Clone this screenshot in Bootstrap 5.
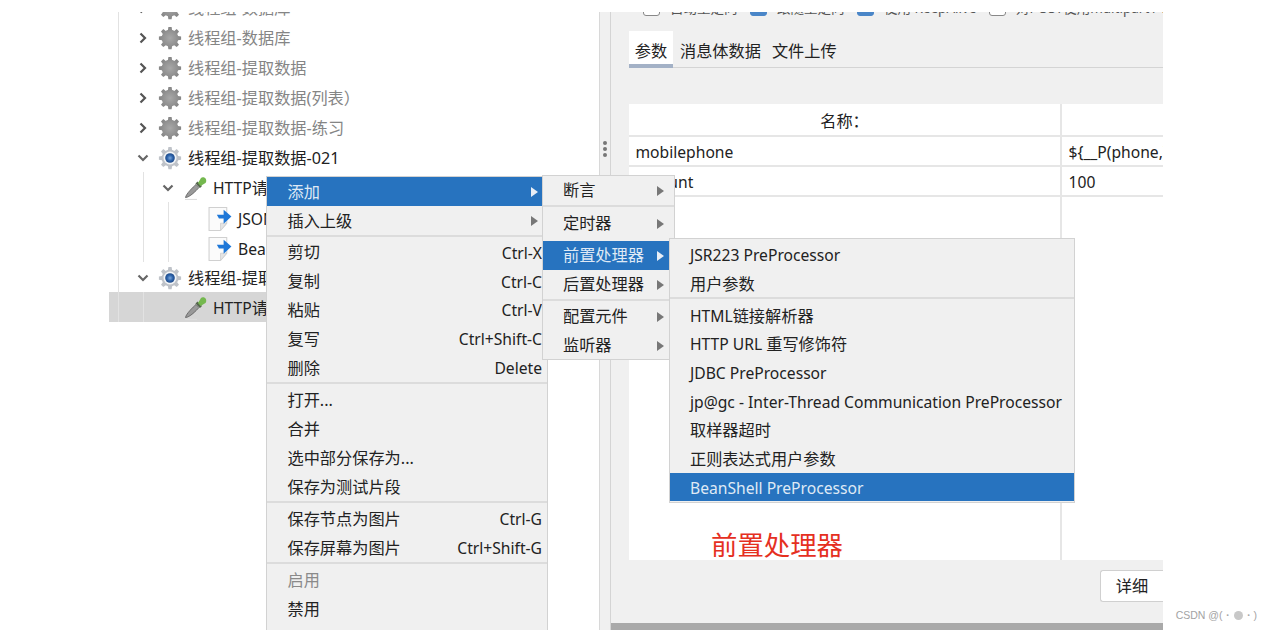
<!DOCTYPE html>
<html lang="zh"><head><meta charset="utf-8"><title>JMeter</title>
<link rel="stylesheet" href="https://cdn.jsdelivr.net/npm/bootstrap@5.3.0/dist/css/bootstrap.min.css">
<style>
html,body{height:630px;overflow:hidden;background:#fff}
body{font-family:"Noto Sans","Noto Sans CJK SC",sans-serif;font-size:16.2px;color:#222;line-height:1.2}
.en{font-size:15.65px}
.shot{margin:12px 0 0 109px;width:1054px;height:618px;overflow:hidden;position:relative}
.tree-pane{width:491px;flex:none;border-right:1px solid #d8d8d8;overflow:hidden}
.tree-inner{margin-top:-20px}
.t-row{height:30px;display:flex;align-items:center;white-space:nowrap;padding-left:28px;padding-top:4px;
 background-image:linear-gradient(#e2e2e2,#e2e2e2);background-size:1px 100%;background-position:9px 0;background-repeat:no-repeat}
.t-row.g2{background-image:linear-gradient(#e2e2e2,#e2e2e2),linear-gradient(#e2e2e2,#e2e2e2);background-size:1px 100%,1px 100%;background-position:9px 0,34px 0}
.t-row.g3{background-image:linear-gradient(#e2e2e2,#e2e2e2),linear-gradient(#e2e2e2,#e2e2e2),linear-gradient(#e2e2e2,#e2e2e2);background-size:1px 100%,1px 100%,1px 100%;background-position:9px 0,34px 0,59px 0}
.t-row.sel{background-color:#d6d6d6}
.t-dis{color:#858585}
.ind1{padding-left:53px}.ind2{padding-left:99px}
.chev{width:12px;height:12px;flex:none;margin:0 9px 2px 0}
.no-chev{width:21px;flex:none}
.ic{width:24px;height:24px;flex:none;margin:0 6px 2px 0}
.ic-doc{margin:0 5px 2px 0;width:25px;height:25px;flex:none}
.split{width:11px;flex:none;background:#f0f0f0;border-right:1px solid #d4d4d4;padding-top:129px}
.split-dots{gap:2px}
.dot{width:4px;height:4px;border-radius:50%;background:#777}
.right-pane{width:552px;flex:none;background:#f0f0f0;overflow:hidden}
.opts{margin-top:-16px;padding:2px 0 0 32px;height:22px;white-space:nowrap;overflow:hidden;color:#555;font-size:13.5px;flex:none}
.box{width:17px;height:17px;border:1px solid #888;border-radius:3px;background:#fff;flex:none;margin:0 10px 2px 0}
.box.on{background:#4a86c8;border-color:#4a86c8}
.opt1{width:107px;flex:none;display:flex;align-items:center}
.opt3{width:132px;flex:none;display:flex;align-items:center}
.tabs{margin:13px 0 0 18px;height:37px;border-bottom:1px solid #d4d4d4;flex:none}
.tab-on{width:44px;background:#fff;border-bottom:4px solid #a3b1c6;text-align:center;padding-top:11px;height:37px}
.tab-x{padding:11px 0 0 7px}
.tab-x+.tab-x{padding-left:11px}
.tbl{margin:36px 0 0 18px;background:#fff;height:456px;flex:none;display:grid;grid-template-columns:433px 101px;grid-template-rows:33px 30px 30px 1fr}
.cell{padding:2px 0 0 6.5px;border-bottom:2px solid #e6e6e6;border-right:2px solid #e6e6e6;display:flex;align-items:center;white-space:nowrap;overflow:hidden}
.cell.hd{justify-content:center;padding:5px 0 0}
.cell.fill{border-bottom:0}
.note{color:#e5301f;font-size:26.4px;padding-left:82px;align-items:flex-end;line-height:1.05}
.bot{height:63px;justify-content:flex-end;padding-top:10px;flex:none}
.btn-detail{width:63px;height:32px;background:#fff;border:1px solid #d0d0d0;border-right:0;border-radius:3px 0 0 3px;text-align:center;line-height:30px}
.strip{height:7px;background:#a9a9a9;flex:none}
.menu-box{position:absolute;background:#f0f0f0;border:1px solid #d2d2d2;white-space:nowrap}
.m-main{left:157px;top:164px;width:282px;height:460px;border-bottom:0}
.m-sub1{left:433px;top:163px;width:133px;height:185px}
.m-sub2{left:560px;top:226px;width:406px;height:265px;padding-top:1px}
.mi{height:29px;display:flex;align-items:center;justify-content:space-between;padding:1.5px 5px 0 20.5px}
.m-main .mi.tight{height:28.8px}
.m-sub1 .mi{padding:0 10px 0 20px}
.m-sub1 .mi.nar{padding-right:5px}
.m-sub2 .mi{padding:3px 0 0 20px;height:28.7px}
.mi.act{background:#2773bf;color:#dfe9f5}
.mi.off{color:#8a8a8a}
.msep{height:3px;background:#dcdcdc;border-bottom:1px solid #f0f0f0}
.arr{width:0;height:0;border-left:7px solid #777;border-top:5px solid transparent;border-bottom:5px solid transparent;flex:none}
.act .arr{border-left-color:#e8eef6}
.nar{width:126px}
.m-sub1 .mi.tall{height:33px;padding-bottom:1px}
.wm{position:absolute;right:14px;bottom:8px;font-size:10.5px;color:#a3a3a3;font-family:"Liberation Sans",sans-serif}
.wm-dot{display:inline-block;width:9px;height:9px;border-radius:50%;background:#c8c8c8;vertical-align:-1px}
</style></head><body>
<svg width="0" height="0" class="d-block" aria-hidden="true"><defs>
<radialGradient id="gg"><stop offset="0" stop-color="#a8a8a8"/><stop offset="1" stop-color="#858585"/></radialGradient>
<radialGradient id="bb"><stop offset="0" stop-color="#7aa7dc"/><stop offset=".6" stop-color="#2c62aa"/><stop offset="1" stop-color="#1f4a88"/></radialGradient>
<g id="gear"><path d="M10.4 1h3.2l.5 3a8 8 0 0 1 2.100.9l2.500-1.800 2.300 2.300-1.800 2.500c.4.7.7 1.400.9 2.100l3 .5v3.200l-3 .5a8 8 0 0 1-.9 2.100l1.800 2.500-2.300 2.300-2.500-1.800a8 8 0 0 1-2.100.9l-.5 3h-3.200l-.5-3a8 8 0 0 1-2.100-.9l-2.500 1.800-2.300-2.300 1.800-2.500a8 8 0 0 1-.9-2.100l-3-.5v-3.200l3-.5c.2-.7.5-1.400.9-2.100L3 5.400l2.300-2.300L7.800 4.900a8 8 0 0 1 2.100-.9z"/></g>
<g id="drop"><path d="M2.500 21.500c.5-3.500 7.500-10.500 10.500-13l3 3c-2.500 3-9.500 10-13.500 10z" fill="#9a9a9a" stroke="#5c5c5c" stroke-width=".8"/><path d="M12.500 7.500l4.500 4.500 2-2-4.500-4.500z" fill="#55664c"/><path d="M15 7l3-5c1-1 3.500-.8 4.500.5s1 3.500 0 4.500l-5 3z" fill="#74b84e"/><path d="M2 23.500h12" stroke="#ddd" stroke-width="1.200"/></g>
<g id="doc"><path d="M1 1.500h17v15l-6 7H1z" fill="#fbfbfb" stroke="#d0d0d0"/><path d="M12 23.500v-7h6z" fill="#e4e4e4" stroke="#d0d0d0" stroke-width=".8"/><path d="M8.500 8.500h6.500V3.500l7.500 6.500-7.500 7v-5h-4.500z" fill="#1f78d8"/></g>
</defs></svg>
<div class="shot d-flex">
 <div class="tree-pane bg-white"><div class="tree-inner">
  <div class="t-row t-dis"><svg class="chev" viewBox="0 0 12 12"><path d="M3.500 1.500l4.500 4.500-4.500 4.500" fill="none" stroke="#555" stroke-width="2.200"/></svg><svg class="ic" viewBox="0 0 24 24" fill="url(#gg)"><use href="#gear"/></svg>线程组-数据库</div>
  <div class="t-row t-dis"><svg class="chev" viewBox="0 0 12 12"><path d="M3.500 1.500l4.500 4.500-4.500 4.500" fill="none" stroke="#555" stroke-width="2.200"/></svg><svg class="ic" viewBox="0 0 24 24" fill="url(#gg)"><use href="#gear"/></svg>线程组-数据库</div>
  <div class="t-row t-dis"><svg class="chev" viewBox="0 0 12 12"><path d="M3.500 1.500l4.500 4.500-4.500 4.500" fill="none" stroke="#555" stroke-width="2.200"/></svg><svg class="ic" viewBox="0 0 24 24" fill="url(#gg)"><use href="#gear"/></svg>线程组-提取数据</div>
  <div class="t-row t-dis"><svg class="chev" viewBox="0 0 12 12"><path d="M3.500 1.500l4.500 4.500-4.500 4.500" fill="none" stroke="#555" stroke-width="2.200"/></svg><svg class="ic" viewBox="0 0 24 24" fill="url(#gg)"><use href="#gear"/></svg>线程组-提取数据(列表）</div>
  <div class="t-row t-dis"><svg class="chev" viewBox="0 0 12 12"><path d="M3.500 1.500l4.500 4.500-4.500 4.500" fill="none" stroke="#555" stroke-width="2.200"/></svg><svg class="ic" viewBox="0 0 24 24" fill="url(#gg)"><use href="#gear"/></svg>线程组-提取数据-练习</div>
  <div class="t-row"><svg class="chev" viewBox="0 0 12 12"><path d="M1.500 3.500l4.500 4.500 4.500-4.500" fill="none" stroke="#666" stroke-width="2.200"/></svg><svg class="ic" viewBox="0 0 24 24" fill="#bfc3c9"><use href="#gear"/><circle cx="12" cy="12" r="6.500" fill="#f4f6f8"/><circle cx="12" cy="12" r="4.800" fill="url(#bb)"/></svg>线程组-提取数据-021</div>
  <div class="t-row g2 ind1"><svg class="chev" viewBox="0 0 12 12"><path d="M1.500 3.500l4.500 4.500 4.500-4.500" fill="none" stroke="#666" stroke-width="2.200"/></svg><svg class="ic" viewBox="0 0 24 24"><use href="#drop"/></svg><span><span class="en">HTTP</span>请求</span></div>
  <div class="t-row g3 ind2"><svg class="ic-doc" viewBox="0 0 24 24"><use href="#doc"/></svg><span class="en">JSON提取器</span></div>
  <div class="t-row g3 ind2"><svg class="ic-doc" viewBox="0 0 24 24"><use href="#doc"/></svg><span class="en">BeanShell</span></div>
  <div class="t-row"><svg class="chev" viewBox="0 0 12 12"><path d="M1.500 3.500l4.500 4.500 4.500-4.500" fill="none" stroke="#666" stroke-width="2.200"/></svg><svg class="ic" viewBox="0 0 24 24" fill="#bfc3c9"><use href="#gear"/><circle cx="12" cy="12" r="6.500" fill="#f4f6f8"/><circle cx="12" cy="12" r="4.800" fill="url(#bb)"/></svg>线程组-提取数据</div>
  <div class="t-row g2 ind1 sel"><span class="no-chev"></span><svg class="ic" viewBox="0 0 24 24"><use href="#drop"/></svg><span><span class="en">HTTP</span>请求</span></div>
 </div></div>
 <div class="split d-flex flex-column align-items-center split-dots"><span class="dot"></span><span class="dot"></span><span class="dot"></span></div>
 <div class="right-pane d-flex flex-column">
  <div class="opts d-flex align-items-center">
   <span class="opt1"><span class="box"></span>自动重定向</span><span class="opt1"><span class="box on"></span>跟随重定向</span><span class="opt3"><span class="box on"></span>使用 KeepAlive</span><span class="opt1"><span class="box"></span>对POST使用multipart / form-data</span>
  </div>
  <div class="tabs d-flex"><div class="tab-on">参数</div><div class="tab-x">消息体数据</div><div class="tab-x">文件上传</div></div>
  <div class="tbl">
   <div class="cell hd">名称：</div><div class="cell hd border-end-0"></div>
   <div class="cell en">mobilephone</div><div class="cell en border-end-0">${__P(phone,)}</div>
   <div class="cell en">amount</div><div class="cell en border-end-0">100</div>
   <div class="cell fill note">前置处理器</div><div class="cell fill border-end-0"></div>
  </div>
  <div class="bot d-flex"><div class="btn-detail">详细</div></div>
  <div class="strip"></div>
 </div>
 <div class="menu-box m-main">
  <div class="mi act"><span>添加</span><span class="arr me-1"></span></div>
  <div class="mi"><span>插入上级</span><span class="arr me-1"></span></div>
  <div class="msep"></div>
  <div class="mi tight"><span>剪切</span><span class="en">Ctrl-X</span></div>
  <div class="mi tight"><span>复制</span><span class="en">Ctrl-C</span></div>
  <div class="mi tight"><span>粘贴</span><span class="en">Ctrl-V</span></div>
  <div class="mi tight"><span>复写</span><span class="en">Ctrl+Shift-C</span></div>
  <div class="mi tight"><span>删除</span><span class="en">Delete</span></div>
  <div class="msep"></div>
  <div class="mi"><span>打开...</span></div>
  <div class="mi"><span>合并</span></div>
  <div class="mi"><span>选中部分保存为...</span></div>
  <div class="mi"><span>保存为测试片段</span></div>
  <div class="msep"></div>
  <div class="mi"><span>保存节点为图片</span><span class="en">Ctrl-G</span></div>
  <div class="mi"><span>保存屏幕为图片</span><span class="en">Ctrl+Shift-G</span></div>
  <div class="msep"></div>
  <div class="mi off"><span>启用</span></div>
  <div class="mi"><span>禁用</span></div>
  <div class="mi off"><span>验证</span></div>
 </div>
 <div class="menu-box m-sub1">
  <div class="mi"><span>断言</span><span class="arr"></span></div>
  <div class="msep"></div>
  <div class="mi tall"><span>定时器</span><span class="arr"></span></div>
  <div class="mi act nar"><span>前置处理器</span><span class="arr"></span></div>
  <div class="mi nar"><span>后置处理器</span><span class="arr"></span></div>
  <div class="msep nar"></div>
  <div class="mi nar"><span>配置元件</span><span class="arr"></span></div>
  <div class="mi nar"><span>监听器</span><span class="arr"></span></div>
 </div>
 <div class="menu-box m-sub2">
  <div class="mi"><span class="en">JSR223 PreProcessor</span></div>
  <div class="mi"><span>用户参数</span></div>
  <div class="msep"></div>
  <div class="mi"><span><span class="en">HTML</span>链接解析器</span></div>
  <div class="mi"><span><span class="en">HTTP URL </span>重写修饰符</span></div>
  <div class="mi"><span class="en">JDBC PreProcessor</span></div>
  <div class="mi"><span class="en">jp@gc - Inter-Thread Communication PreProcessor</span></div>
  <div class="mi"><span>取样器超时</span></div>
  <div class="mi"><span>正则表达式用户参数</span></div>
  <div class="mi act"><span class="en">BeanShell PreProcessor</span></div>
 </div>
</div>
<div class="wm">CSDN @(・<span class="wm-dot"></span>・)</div>
</body></html>
